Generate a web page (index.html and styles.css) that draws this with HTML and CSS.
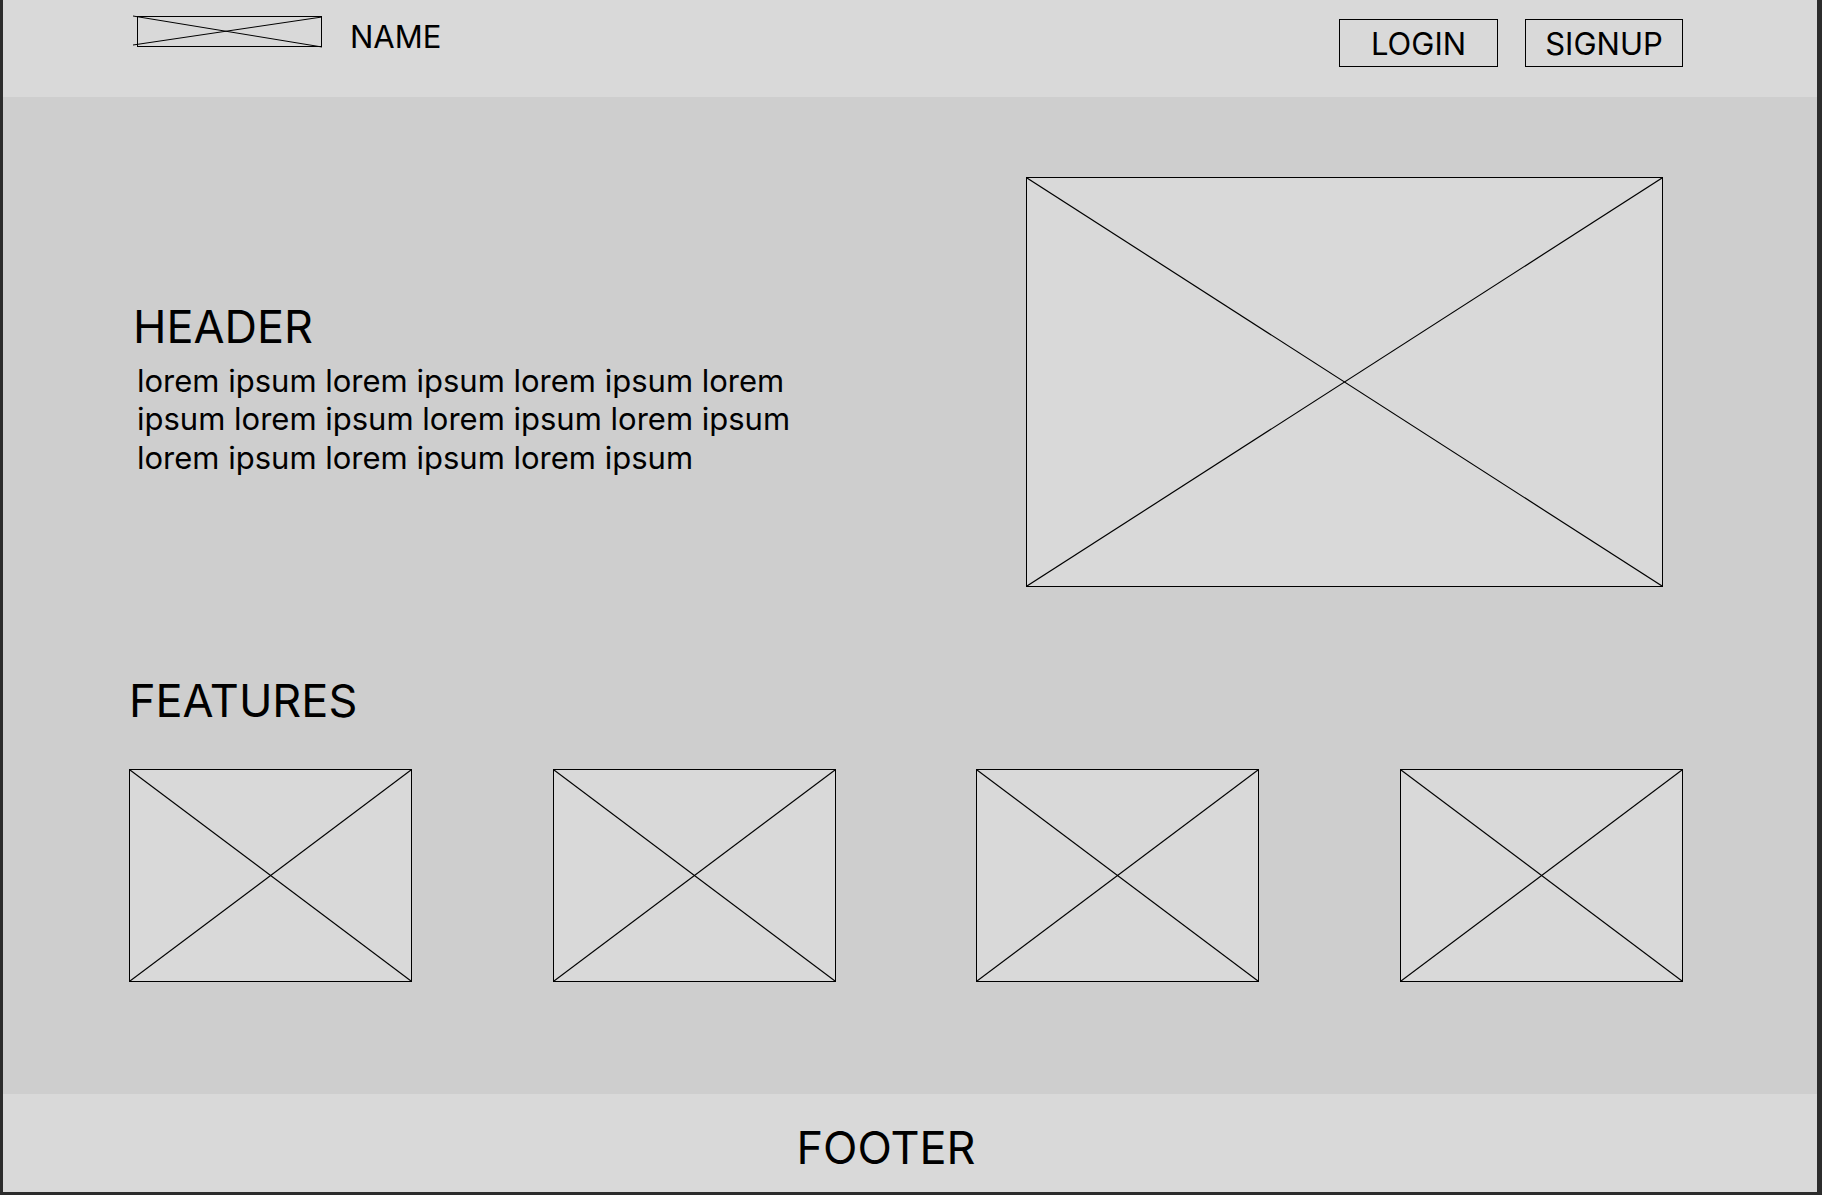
FILE: index.html
```html
<!DOCTYPE html>
<html lang="en">
<head>
<meta charset="utf-8">
<title>Wireframe</title>
<link rel="stylesheet" href="styles.css">
</head>
<body>
<div class="frame">
  <nav class="navbar">
    <div class="brand">
      <svg class="logo" width="189" height="32" viewBox="0 0 189 32">
        <rect x="4.5" y="0.5" width="184" height="30" fill="#d9d9d9" stroke="#000" stroke-width="1"/>
        <line x1="0" y1="0" x2="189" y2="31" stroke="#000" stroke-width="1"/>
        <line x1="0" y1="29" x2="189" y2="1" stroke="#000" stroke-width="1"/>
      </svg>
      <span class="name">NAME</span>
    </div>
    <div class="actions">
      <button class="btn btn-login">LOGIN</button>
      <button class="btn btn-signup">SIGNUP</button>
    </div>
  </nav>
  <main class="main">
    <section class="hero">
      <div class="hero-text">
        <h1 class="hero-title">HEADER</h1>
        <p class="hero-body">lorem ipsum lorem ipsum lorem ipsum lorem<br>ipsum lorem ipsum lorem ipsum lorem ipsum<br>lorem ipsum lorem ipsum lorem ipsum</p>
      </div>
      <div class="placeholder hero-image">
        <svg viewBox="0 0 100 100" preserveAspectRatio="none"><line x1="0" y1="0" x2="100" y2="100"/><line x1="0" y1="100" x2="100" y2="0"/></svg>
      </div>
    </section>
    <section class="features">
      <h2 class="features-title">FEATURES</h2>
      <div class="feature-row">
        <div class="placeholder feature"><svg viewBox="0 0 100 100" preserveAspectRatio="none"><line x1="0" y1="0" x2="100" y2="100"/><line x1="0" y1="100" x2="100" y2="0"/></svg></div>
        <div class="placeholder feature"><svg viewBox="0 0 100 100" preserveAspectRatio="none"><line x1="0" y1="0" x2="100" y2="100"/><line x1="0" y1="100" x2="100" y2="0"/></svg></div>
        <div class="placeholder feature"><svg viewBox="0 0 100 100" preserveAspectRatio="none"><line x1="0" y1="0" x2="100" y2="100"/><line x1="0" y1="100" x2="100" y2="0"/></svg></div>
        <div class="placeholder feature"><svg viewBox="0 0 100 100" preserveAspectRatio="none"><line x1="0" y1="0" x2="100" y2="100"/><line x1="0" y1="100" x2="100" y2="0"/></svg></div>
      </div>
    </section>
  </main>
  <footer class="footer">
    <span class="footer-text">FOOTER</span>
  </footer>
</div>
</body>
</html>
```

FILE: styles.css
```css
* { box-sizing: border-box; }
html, body { margin: 0; padding: 0; }
body {
  font-family: Inter, "Noto Sans", "Liberation Sans", sans-serif;
  color: #000;
  background: #2c2c2c;
}
.frame {
  width: 1822px;
  height: 1195px;
  border-left: 3px solid #2c2c2c;
  border-right: 5px solid #2c2c2c;
  border-bottom: 3px solid #2c2c2c;
  display: flex;
  flex-direction: column;
  background: #cecece;
}
.navbar {
  height: 97px;
  flex: none;
  background: #d9d9d9;
  display: flex;
  justify-content: space-between;
  align-items: flex-start;
  padding: 0 134px 0 130px;
}
.brand {
  display: flex;
  align-items: flex-start;
  gap: 28px;
  padding-top: 16px;
}
.logo { display: block; overflow: visible; }
.name {
  font-size: 31px;
  line-height: 36px;
  margin-top: 3px;
}
.actions {
  display: flex;
  gap: 27px;
  padding-top: 19px;
}
.btn {
  font-family: inherit;
  font-size: 31px;
  line-height: 36px;
  height: 48px;
  background: #d9d9d9;
  border: 1px solid #000;
  color: #000;
  padding: 2px 0 0 0;
  margin: 0;
  display: flex;
  align-items: center;
  justify-content: center;
}
.btn-login { width: 159px; }
.btn-signup { width: 158px; }
.main {
  flex: 1;
  background: #cecece;
  padding: 80px 134px 0 126px;
  display: flex;
  flex-direction: column;
}
.hero {
  display: flex;
  justify-content: space-between;
  align-items: flex-start;
}
.hero-text {
  margin-top: 123px;
  padding-left: 4px;
}
.hero-title {
  font-size: 45px;
  line-height: 54px;
  font-weight: 400;
  margin: 0 0 8px 0;
}
.hero-body {
  font-size: 31px;
  line-height: 38.3px;
  margin: 0;
  padding-left: 4px;
}
.placeholder {
  background: #d9d9d9;
  border: 1px solid #000;
}
.placeholder svg {
  display: block;
  width: 100%;
  height: 100%;
}
.placeholder line {
  stroke: #000;
  stroke-width: 1.2;
  vector-effect: non-scaling-stroke;
}
.hero-image {
  width: 637px;
  height: 410px;
  margin-right: 20px;
}
.features {
  margin-top: 87px;
}
.features-title {
  font-size: 45px;
  line-height: 54px;
  font-weight: 400;
  margin: 0 0 41px 0;
}
.feature-row {
  display: flex;
  justify-content: space-between;
}
.feature {
  width: 283px;
  height: 213px;
}
.footer {
  height: 98px;
  flex: none;
  background: #d9d9d9;
  display: flex;
  justify-content: center;
  align-items: flex-start;
  padding: 27px 48px 0 0;
}
.footer-text {
  font-size: 45px;
  line-height: 54px;
}
```
